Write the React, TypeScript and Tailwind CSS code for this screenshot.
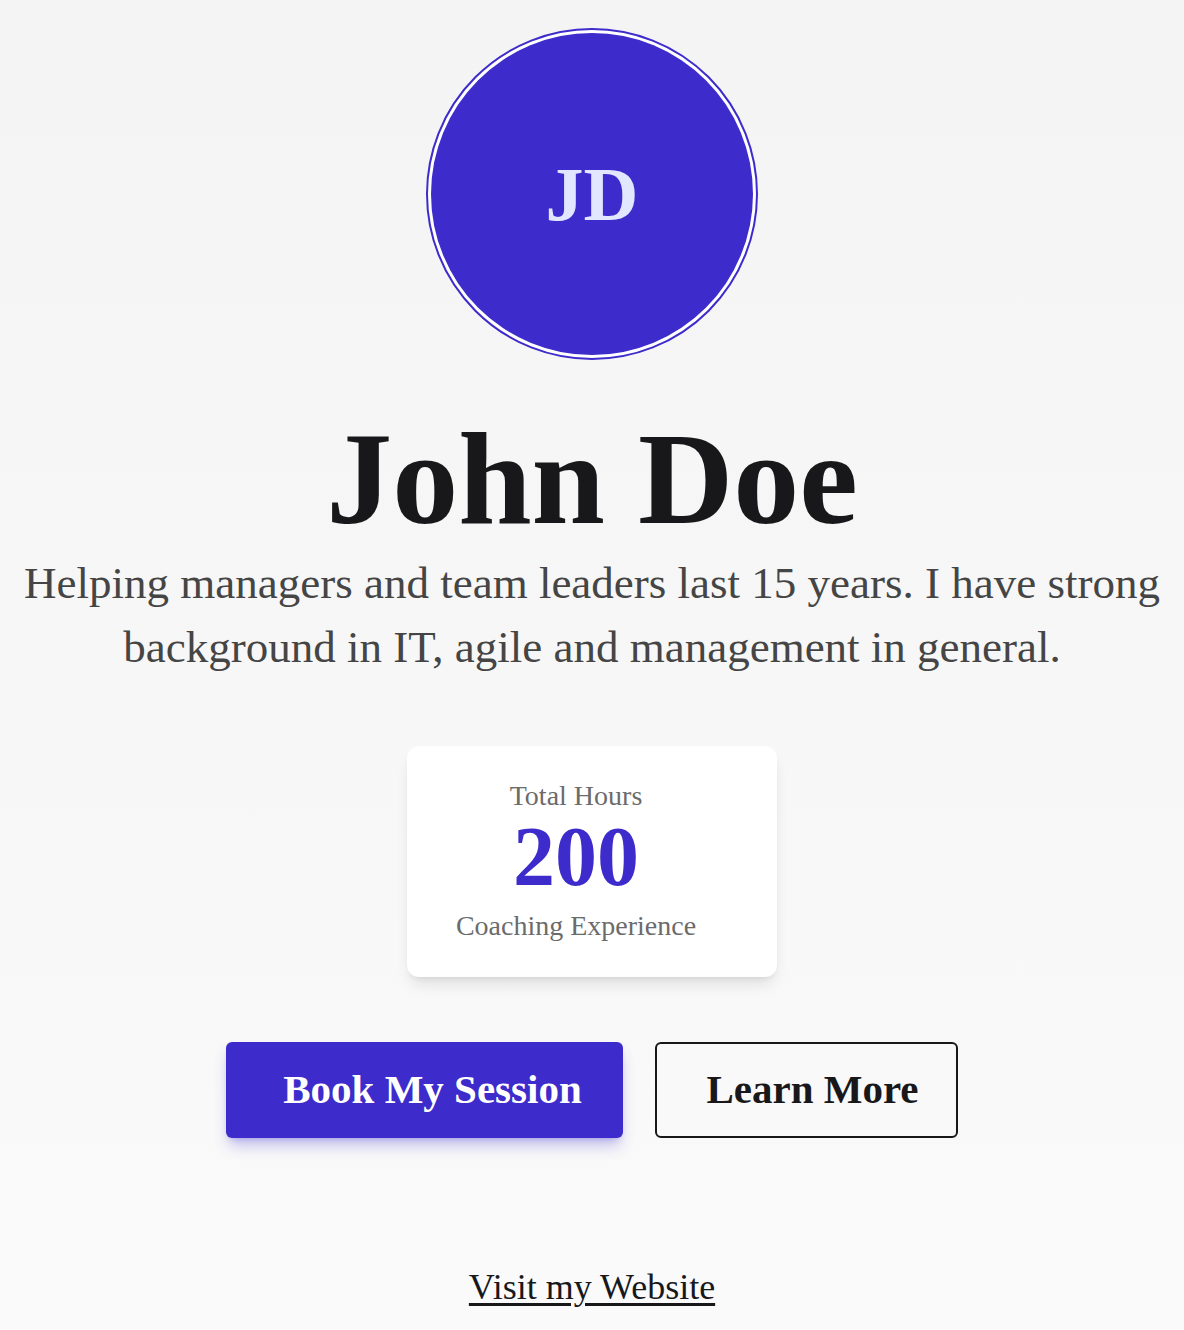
export default function App() {
  return (
    <div className="min-h-screen w-full bg-gradient-to-b from-[#f4f4f4] to-[#fafafa] font-['Liberation_Serif',serif]">
      <div className="flex flex-col items-center px-2 pt-[28px] pb-8">
        {/* avatar */}
        <div className="h-[332px] w-[332px] rounded-full border-2 border-[#3d2bcc] bg-white p-[3px]">
          <div className="flex h-full w-full items-center justify-center rounded-full bg-[#3d2bcc]">
            <span className="text-[76px] font-bold leading-none text-[#e0e7ff]">JD</span>
          </div>
        </div>

        <h1 className="mt-[46px] text-[132px] font-bold leading-[1.1] text-[#18181b]">John Doe</h1>
        <p className="text-center text-[45px] leading-[64px] text-[#454545]">
          Helping managers and team leaders last 15 years. I have strong background in IT, agile and
          management in general.
        </p>

        {/* stats card */}
        <div className="mt-[67px] flex w-[370px] flex-col items-center rounded-xl bg-white pt-[34px] pb-[35px] pr-[32px] shadow-lg">
          <span className="text-[28px] leading-8 text-[#6b6b6b]">Total Hours</span>
          <span className="mt-[3px] text-[84px] font-bold leading-none text-[#3d2bcc]">200</span>
          <span className="mt-[11px] text-[28px] leading-8 text-[#6b6b6b]">Coaching Experience</span>
        </div>

        {/* actions */}
        <div className="mt-[65px] flex gap-8">
          <button className="h-[96px] w-[397px] rounded-md bg-[#3d2bcc] pl-4 text-[41px] font-bold text-white shadow-lg shadow-[#3d2bcc]/30">
            Book My Session
          </button>
          <button className="h-[96px] w-[303px] rounded-md border-2 border-[#18181b] pl-3 text-[41px] font-bold text-[#18181b]">
            Learn More
          </button>
        </div>

        <a href="#" className="mt-[122px] text-[36px] text-[#18181b] underline underline-offset-4">
          Visit my Website
        </a>
      </div>
    </div>
  )
}
